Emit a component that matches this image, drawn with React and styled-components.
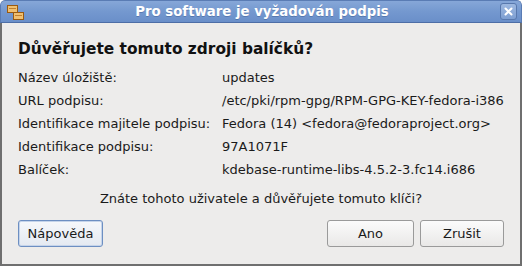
import React from 'react';
import styled, { createGlobalStyle } from 'styled-components';

const GlobalStyle = createGlobalStyle`
  html, body {
    margin: 0;
    padding: 0;
    background: #ffffff;
  }
  * {
    box-sizing: border-box;
  }
`;

const Window = styled.div`
  width: 522px;
  height: 266px;
  display: flex;
  flex-direction: column;
  font-family: 'DejaVu Sans', 'Liberation Sans', sans-serif;
  color: #1a1a1a;
  background: #edeceb;
  border-radius: 5px 5px 0 0;
  overflow: hidden;
`;

const TitleBar = styled.div`
  position: relative;
  height: 23px;
  flex: none;
  display: flex;
  align-items: center;
  justify-content: center;
  background: linear-gradient(to bottom, #86a7d8 0%, #7498cf 50%, #6a8fc9 100%);
  border: 1px solid #5a7cb4;
  border-bottom: 1px solid #4d6ea6;
  border-radius: 5px 5px 0 0;
`;

const Title = styled.span`
  color: #ffffff;
  font-weight: bold;
  font-size: 13.3px;
  padding-left: 2px;
  text-shadow: 0 1px 0 rgba(40, 70, 120, 0.35);
`;

const AppIcon = styled.svg`
  position: absolute;
  left: 5px;
  top: 3px;
`;

const CloseButton = styled.div`
  position: absolute;
  right: 4px;
  top: 2px;
  width: 17px;
  height: 17px;
  border: 1px solid #5878ad;
  border-radius: 3px;
  background: linear-gradient(to bottom, #9db8e0, #7e9fd2);
  display: flex;
  align-items: center;
  justify-content: center;
`;

const Body = styled.div`
  flex: 1;
  display: flex;
  flex-direction: column;
  border-left: 2px solid #6f6f6f;
  border-right: 2px solid #6f6f6f;
  border-bottom: 2px solid #6f6f6f;
  padding: 16px 16px 16px 16px;
`;

const Heading = styled.h1`
  margin: 0 0 7px 0;
  font-size: 15.4px;
  font-weight: bold;
  line-height: 20px;
  color: #111;
`;

const Details = styled.div`
  display: grid;
  grid-template-columns: 204px 1fr;
  font-size: 13px;
  line-height: 23px;
`;

const Label = styled.div`
  white-space: nowrap;
`;

const Value = styled.div`
  white-space: nowrap;
`;

const Question = styled.div`
  margin-top: 9px;
  text-align: center;
  font-size: 13px;
  line-height: 18px;
`;

const ButtonRow = styled.div`
  margin-top: 12px;
  display: flex;
  align-items: center;
  gap: 6px;
`;

const Spacer = styled.div`
  flex: 1;
`;

const Button = styled.button`
  height: 27px;
  width: ${(p) => p.$width}px;
  font-family: 'DejaVu Sans', 'Liberation Sans', sans-serif;
  font-size: 13px;
  color: #1a1a1a;
  border-radius: 3px;
  border: 1px solid ${(p) => (p.$focused ? '#6d8fc2' : '#9a9a9a')};
  background: ${(p) =>
    p.$focused
      ? 'linear-gradient(to bottom, #f6f8fb, #e4e9f1)'
      : 'linear-gradient(to bottom, #fbfbfb, #e9e8e7)'};
  box-shadow: ${(p) => (p.$focused ? 'inset 0 0 0 1px #c5d4ea' : 'none')};
  padding: 0;
`;

const rows = [
  ['Název úložiště:', 'updates'],
  ['URL podpisu:', '/etc/pki/rpm-gpg/RPM-GPG-KEY-fedora-i386'],
  ['Identifikace majitele podpisu:', 'Fedora (14) <fedora@fedoraproject.org>'],
  ['Identifikace podpisu:', '97A1071F'],
  ['Balíček:', 'kdebase-runtime-libs-4.5.2-3.fc14.i686'],
];

export default function App() {
  return (
    <>
      <GlobalStyle />
      <Window>
        <TitleBar>
          <AppIcon width="20" height="18" viewBox="0 0 20 18">
            <rect x="1.5" y="1.5" width="10" height="7" fill="#f0c070" stroke="#9a5a10" />
            <line x1="3" y1="4.5" x2="10" y2="4.5" stroke="#c08030" />
            <rect x="7.5" y="8.5" width="10" height="7" fill="#f0c070" stroke="#9a5a10" />
            <line x1="9" y1="11.5" x2="16" y2="11.5" stroke="#c08030" />
          </AppIcon>
          <Title>Pro software je vyžadován podpis</Title>
          <CloseButton>
            <svg width="9" height="9" viewBox="0 0 9 9">
              <path d="M1.5 1.5 L7.5 7.5 M7.5 1.5 L1.5 7.5" stroke="#ffffff" strokeWidth="2" strokeLinecap="round" />
            </svg>
          </CloseButton>
        </TitleBar>
        <Body>
          <Heading>Důvěřujete tomuto zdroji balíčků?</Heading>
          <Details>
            {rows.map(([label, value]) => (
              <React.Fragment key={label}>
                <Label>{label}</Label>
                <Value>{value}</Value>
              </React.Fragment>
            ))}
          </Details>
          <Question>Znáte tohoto uživatele a důvěřujete tomuto klíči?</Question>
          <ButtonRow>
            <Button $width={85} $focused>Nápověda</Button>
            <Spacer />
            <Button $width={87}>Ano</Button>
            <Button $width={84}>Zrušit</Button>
          </ButtonRow>
        </Body>
      </Window>
    </>
  );
}
